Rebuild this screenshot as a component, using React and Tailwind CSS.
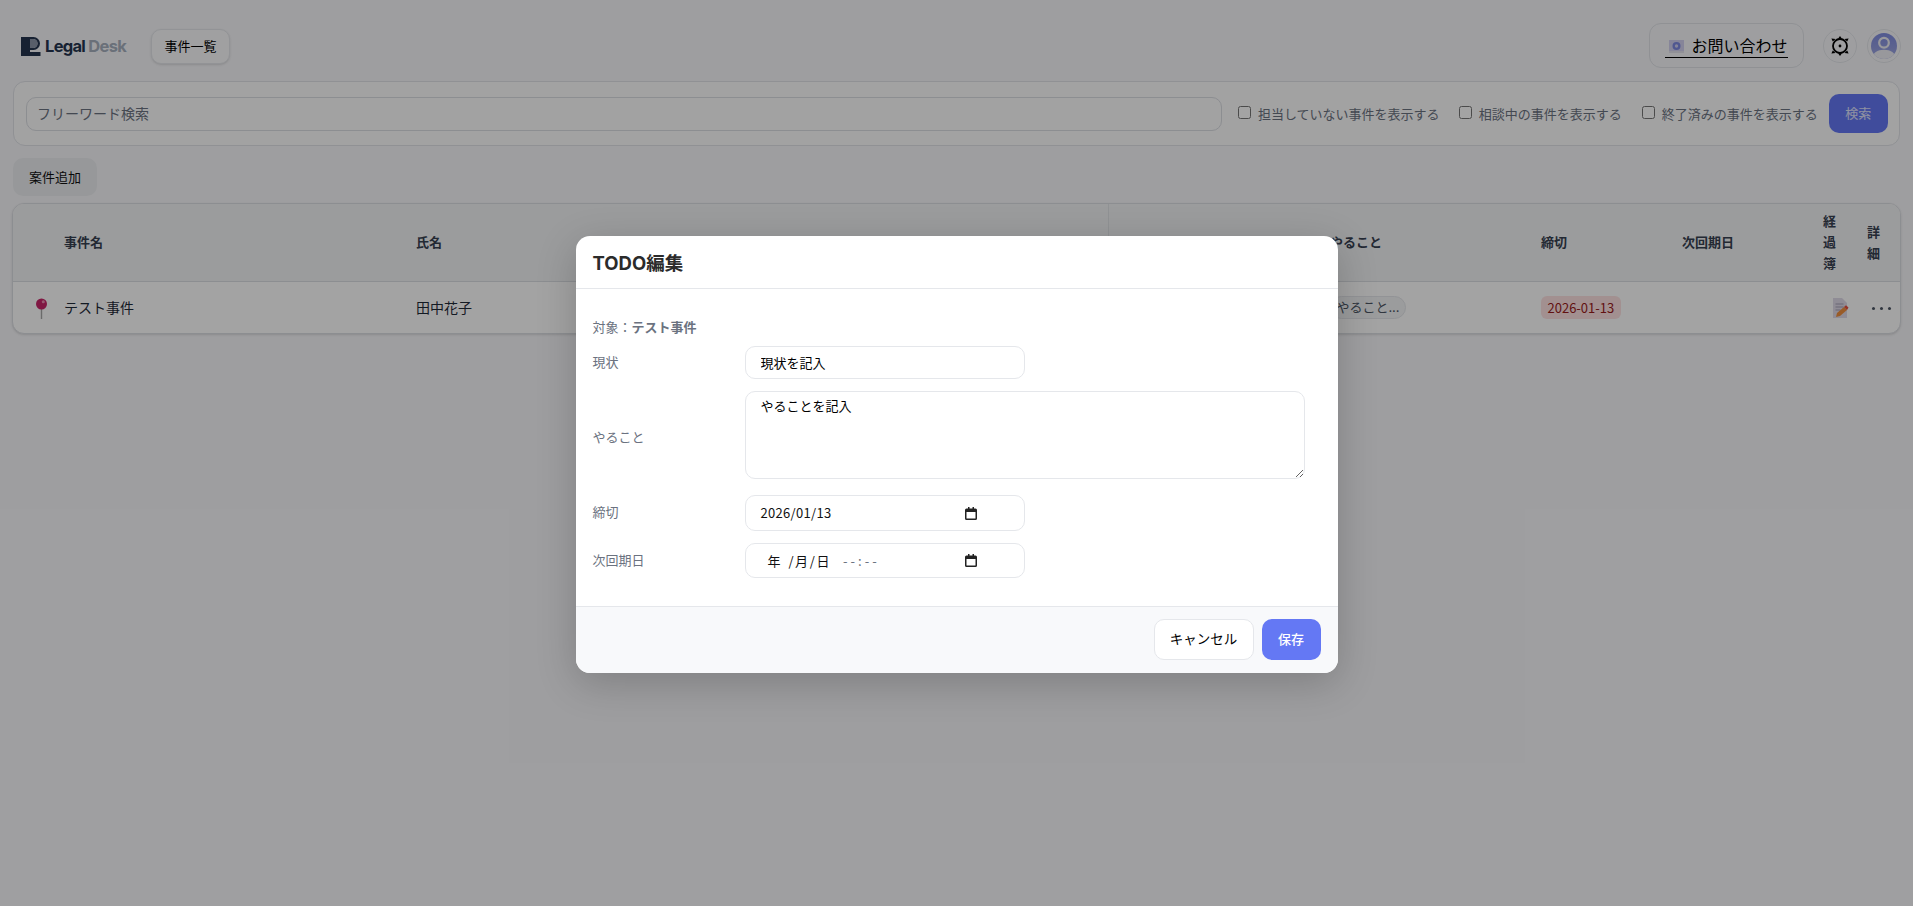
const cjk = '"Noto Sans CJK JP", sans-serif';

function Logo() {
  return (
    <div className="flex items-center gap-[4px]">
      <svg width="20" height="19" viewBox="0 0 20 19">
        <path d="M0 0h9v19H0z" fill="#25344f" />
        <path d="M9 0h3.500a6.500 6.500 0 0 1 6.500 6.500 6.500 6.500 0 0 1-6.500 6.500H9v-2h3a4 4 0 0 0 0-9H9z" fill="#25344f" />
        <path d="M9 2h3.200a4.500 4.500 0 0 1 0 9H9z" fill="#8a94a6" />
        <path d="M9 15h10.500v4H9z" fill="#25344f" />
      </svg>
      <span className="text-[16.500px] font-bold tracking-[-0.7px] leading-none text-[#25344f]">
        Legal <span className="text-[#a6afbd]">Desk</span>
      </span>
    </div>
  );
}

function GearIcon() {
  return (
    <svg width="20" height="22" viewBox="0 0 20 22" fill="none">
      <circle cx="10" cy="11" r="7" stroke="#000" strokeWidth="1.800" />
      <circle cx="10" cy="11" r="1.400" fill="#000" />
      <path d="M8 3.800 10 1l2 2.800zM8 18.200 10 21l2-2.800z" fill="#000" />
      <path d="M3 5.500l-.6-1.300 1.800.3zM17 5.500l.6-1.300-1.800.3zM3 16.500l-.6 1.300 1.800-.3zM17 16.500l.6 1.300-1.800-.3z" fill="#000" stroke="#000" strokeWidth="1.200" />
    </svg>
  );
}

function Avatar() {
  return (
    <div className="w-[34px] h-[34px] rounded-full border border-[#e5e7eb] p-[3px] flex">
      <svg viewBox="0 0 28 28" className="w-full h-full">
        <defs>
          <linearGradient id="av" x1="0" y1="0" x2="0" y2="1">
            <stop offset="0" stopColor="#7f8ce0" />
            <stop offset="1" stopColor="#a0a8e0" />
          </linearGradient>
          <clipPath id="avc">
            <circle cx="14" cy="14" r="14" />
          </clipPath>
        </defs>
        <g clipPath="url(#avc)">
          <rect width="28" height="28" fill="url(#av)" />
          <circle cx="14" cy="10.500" r="5.200" fill="none" stroke="#eeeef4" strokeWidth="2.400" />
          <path d="M1.500 28c0-7 5.500-10 12.500-10s12.500 3 12.500 10z" fill="#eeeef4" />
        </g>
      </svg>
    </div>
  );
}

function PinIcon() {
  return (
    <svg width="13" height="21" viewBox="0 0 13 21">
      <rect x="5.800" y="10" width="1.400" height="11" fill="#a8a8a8" />
      <circle cx="6.500" cy="6" r="5.500" fill="#c8276a" />
      <circle cx="8.300" cy="3.800" r="1.500" fill="#ee8fb4" />
    </svg>
  );
}

function MemoIcon() {
  return (
    <svg width="17" height="20" viewBox="0 0 17 20">
      <path d="M1 0h9l5 5v15H1z" fill="#e0dcea" />
      <path d="M3.500 6h8M3.500 9h8M3.500 12h5" stroke="#a5a0b5" strokeWidth="1" />
      <path d="M4 19l1-4 7-6 3 3-7 6z" fill="#f0913f" />
      <path d="M12 9l2-1.800 2.500 2.400L15 12z" fill="#e8503f" />
    </svg>
  );
}

function MailIcon() {
  return (
    <svg width="15" height="13" viewBox="0 0 15 13">
      <rect width="15" height="13" fill="#d2d0f0" />
      <rect y="11" width="15" height="2" fill="#e2e2ec" />
      <circle cx="7.500" cy="6" r="4" fill="#7d88e2" />
      <circle cx="7.500" cy="6" r="1.700" fill="#d2d0f0" />
    </svg>
  );
}

function CalendarIcon() {
  return (
    <svg width="12" height="13" viewBox="0 0 12 13">
      <path d="M3 0h1.500v1.500h3V0H9v1.500h1.500A1.500 1.500 0 0 1 12 3v8.500a1.500 1.500 0 0 1-1.500 1.500h-9A1.500 1.500 0 0 1 0 11.500V3a1.500 1.500 0 0 1 1.500-1.500H3zM1.500 5v6.500h9V5z" fill="#222" />
    </svg>
  );
}

function FilterCheck({ label, className }) {
  return (
    <label className={`flex items-center shrink-0 whitespace-nowrap text-[13px] text-[#6b7280] ${className}`}>
      <input type="checkbox" className="m-0 w-[13px] h-[13px] mb-[2px]" />
      <span className="pt-[2px]">{label}</span>
    </label>
  );
}

function Row({ label, children }) {
  return (
    <div className="flex items-center">
      <div className="w-[152px] shrink-0 text-[13px] text-[#6b7280]">{label}</div>
      {children}
    </div>
  );
}

function DateField({ children }) {
  return (
    <div className="w-[280px] border border-[#e5e7eb] rounded-[10px] bg-white flex items-center justify-between pl-[15px] pr-[47px] text-[13px] text-[#111]">
      {children}
      <CalendarIcon />
    </div>
  );
}

export default function App() {
  return (
    <div
      className="relative w-full h-[906px] overflow-hidden bg-[#f8f8fb] text-[#111827]"
      style={{ fontFamily: 'Inter, "Noto Sans CJK JP", sans-serif' }}
    >
      <header className="h-[81px] flex items-start justify-between pl-[21px] pr-[12px]">
        <div className="flex items-center pt-[29px]">
          <Logo />
          <button className="ml-[25px] h-[35px] w-[79px] pt-[1px] rounded-[10px] border border-[#e5e7eb] bg-[#fbfbfc] shadow-sm text-[13px] text-black">
            事件一覧
          </button>
        </div>
        <div className="flex items-start pt-[23px]">
          <div className="h-[45px] w-[155px] rounded-[12px] border border-[#e1e3e8] flex items-center justify-center">
            <a className="flex items-center gap-[7px] border-b border-black text-[16px] leading-[21px] text-black pl-[4px] mt-[3px]">
              <MailIcon />
              お問い合わせ
            </a>
          </div>
          <div className="ml-[19px] mt-[6px] w-[34px] h-[34px] rounded-full border border-[#e5e7eb] flex items-center justify-center">
            <GearIcon />
          </div>
          <div className="ml-[10px] mt-[6px]">
            <Avatar />
          </div>
        </div>
      </header>

      <section className="mx-[13px] h-[65px] rounded-[12px] border border-[#e1e3e8] bg-[#fdfdfe] flex items-center pl-[12px] pr-[11px]">
        <input
          placeholder="フリーワード検索"
          className="w-[1196px] h-[34px] shrink-0 rounded-[10px] border border-[#dcdee3] px-[10px] text-[14px] placeholder:text-[#6b7280] outline-none"
        />
        <FilterCheck label="担当していない事件を表示する" className="ml-[16px] gap-[7px]" />
        <FilterCheck label="相談中の事件を表示する" className="ml-[19px] gap-[7px]" />
        <FilterCheck label="終了済みの事件を表示する" className="ml-[20px] gap-[7px]" />
        <button className="ml-[11px] shrink-0 w-[59px] h-[39px] rounded-[10px] bg-[#6478f4] text-white/80 text-[13px]">検索</button>
      </section>

      <button className="mt-[12px] ml-[13px] block w-[84px] h-[38px] pt-[1px] rounded-[10px] bg-[#eceef1] text-[13px] text-[#111]">
        案件追加
      </button>

      <div className="mt-[7px] mx-[12px] rounded-[12px] border border-[#dcdee3] shadow-sm overflow-hidden bg-white">
        <div className="grid grid-cols-[51px_352px_693px_221px_211px_141px_141px_44px_1fr] h-[78px] items-center bg-[#f3f4f6] border-b border-[#dcdee3] text-[13px] font-bold text-[#374151] leading-[21px]">
          <div />
          <div>事件名</div>
          <div className="h-full flex items-center border-r border-[#e2e4e8]">氏名</div>
          <div />
          <div>やること</div>
          <div>締切</div>
          <div>次回期日</div>
          <div className="w-[14px]">経過簿</div>
          <div className="w-[14px]">詳細</div>
        </div>
        <div className="grid grid-cols-[51px_352px_693px_221px_211px_141px_141px_44px_1fr] h-[51px] items-center text-[14px] text-[#1f2937]">
          <div className="flex justify-center pl-[5px] pt-[1px]">
            <PinIcon />
          </div>
          <div>テスト事件</div>
          <div>田中花子</div>
          <div />
          <div>
            <span className="inline-flex h-[23px] w-[76px] items-center justify-center rounded-full bg-[#f3f4f6] border border-[#e5e7eb] text-[13px] text-[#4b5563]">
              やること...
            </span>
          </div>
          <div>
            <span
              className="inline-flex h-[23px] px-[6.500px] items-center rounded-[6px] bg-[#fee2e2] text-[13px] text-[#991b1b]"
              style={{ fontFamily: cjk }}
            >
              2026-01-13
            </span>
          </div>
          <div />
          <div className="pl-[9px] pt-[1px] flex">
            <MemoIcon />
          </div>
          <div className="flex gap-[5px] pl-[5px] pt-[1px]">
            <span className="w-[3px] h-[3px] rounded-full bg-[#4b5563]" />
            <span className="w-[3px] h-[3px] rounded-full bg-[#4b5563]" />
            <span className="w-[3px] h-[3px] rounded-full bg-[#4b5563]" />
          </div>
        </div>
      </div>

      <div className="absolute inset-0 bg-black/36 pt-[3px] flex items-center justify-center">
        <div className="w-[762px] rounded-[14px] bg-white shadow-[0_10px_40px_rgba(0,0,0,0.2)] overflow-hidden">
          <div className="h-[53px] border-b border-[#e5e7eb] flex items-center px-[17px] pt-[3px]">
            <h2 className="text-[18.500px] font-bold text-[#2b2b2b]">TODO編集</h2>
          </div>
          <div className="px-[17px] pt-[28px] pb-[28px]">
            <p className="text-[13px] leading-[20px] text-[#6b7280] mb-[9px]">
              対象：<span className="font-bold text-[#6b7280]">テスト事件</span>
            </p>
            <div className="flex flex-col gap-[12px]">
              <Row label="現状">
                <input
                  defaultValue="現状を記入"
                  className="w-[280px] h-[33px] border border-[#e5e7eb] rounded-[10px] px-[15px] text-[13px] text-black outline-none"
                />
              </Row>
              <Row label={<span className="block pt-[2px]">やること</span>}>
                <textarea
                  defaultValue="やることを記入"
                  className="w-[560px] h-[88px] mb-[4px] border border-[#e5e7eb] rounded-[10px] px-[15px] py-[4px] text-[13px] leading-[20px] text-black outline-none block"
                />
              </Row>
              <Row label="締切">
                <div className="h-[36px] flex">
                  <DateField>
                    <span className="tracking-[0.3px]" style={{ fontFamily: cjk }}>2026/01/13</span>
                  </DateField>
                </div>
              </Row>
              <Row label="次回期日">
                <div className="h-[35px] flex">
                  <DateField>
                    <span className="pl-[7px]" style={{ fontFamily: cjk }}>
                      年 <span className="ml-[5px] tracking-[1.600px]">/月/日</span>
                      <span className="ml-[12px] tracking-[3px] text-[#6b7280]">--:--</span>
                    </span>
                  </DateField>
                </div>
              </Row>
            </div>
          </div>
          <div className="h-[67px] pb-[1px] border-t border-[#e5e7eb] bg-[#f8f9fb] flex items-center justify-end gap-[8px] px-[17px]">
            <button className="w-[100px] h-[41px] rounded-[10px] border border-[#e5e7eb] bg-white text-[13.500px] text-black">
              キャンセル
            </button>
            <button className="w-[59px] h-[41px] rounded-[10px] bg-[#6478f4] text-white text-[13px] font-medium">
              保存
            </button>
          </div>
        </div>
      </div>
    </div>
  );
}
